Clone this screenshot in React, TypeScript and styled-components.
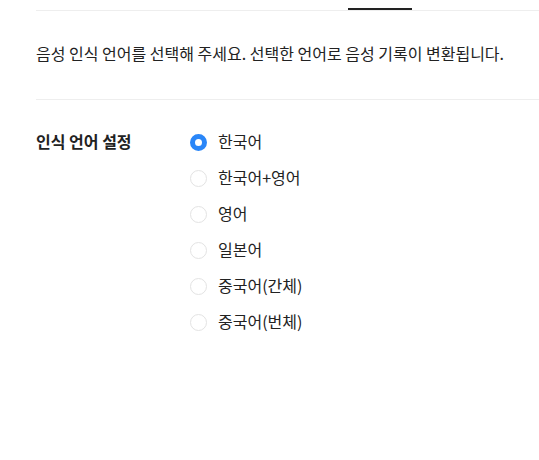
import { useState } from "react";
import styled, { createGlobalStyle } from "styled-components";

const GlobalStyle = createGlobalStyle`
  html, body {
    margin: 0;
    padding: 0;
    background: #ffffff;
  }
  body {
    font-family: "Noto Sans CJK KR", "Noto Sans", sans-serif;
    color: #222222;
  }
`;

const Page = styled.div`
  display: flex;
  flex-direction: column;
  padding-left: 36px;
  width: 539px;
  box-sizing: border-box;
`;

const TabBar = styled.div`
  display: flex;
  height: 10px;
  border-bottom: 1px solid #eeeeee;
  padding-left: 312px;
`;

const Tab = styled.div<{ $active?: boolean }>`
  width: 64px;
  height: 10px;
  box-sizing: border-box;
  border-bottom: 2px solid ${(p) => (p.$active ? "#222222" : "transparent")};
`;

const Description = styled.p`
  margin: 0;
  padding: 31px 0 35px;
  font-size: 16px;
  line-height: 22px;
  color: #222222;
  border-bottom: 1px solid #eeeeee;
  white-space: nowrap;
`;

const Setting = styled.div`
  display: grid;
  grid-template-columns: 154px 1fr;
  padding-top: 30px;
`;

const Label = styled.div`
  font-size: 16px;
  font-weight: 700;
  line-height: 22px;
  color: #222222;
`;

const Options = styled.div`
  display: flex;
  flex-direction: column;
  gap: 14px;
`;

const Option = styled.label`
  display: flex;
  align-items: center;
  gap: 11px;
  height: 22px;
  font-size: 16px;
  color: #222222;
  cursor: pointer;
`;

const Circle = styled.span<{ $checked: boolean }>`
  width: 17px;
  height: 17px;
  border-radius: 50%;
  box-sizing: border-box;
  margin-top: 2px;
  flex-shrink: 0;
  background: #ffffff;
  border: ${(p) => (p.$checked ? "5.5px solid #2a86f8" : "1.5px solid #e3e3e3")};
`;

const languages = ["한국어", "한국어+영어", "영어", "일본어", "중국어(간체)", "중국어(번체)"];

export default function App() {
  const [selected, setSelected] = useState("한국어");

  return (
    <Page>
      <GlobalStyle />
      <TabBar>
        <Tab $active />
      </TabBar>
      <Description>
        음성 인식 언어를 선택해 주세요. 선택한 언어로 음성 기록이 변환됩니다.
      </Description>
      <Setting>
        <Label>인식 언어 설정</Label>
        <Options>
          {languages.map((lang) => (
            <Option key={lang} onClick={() => setSelected(lang)}>
              <Circle $checked={selected === lang} />
              {lang}
            </Option>
          ))}
        </Options>
      </Setting>
    </Page>
  );
}
